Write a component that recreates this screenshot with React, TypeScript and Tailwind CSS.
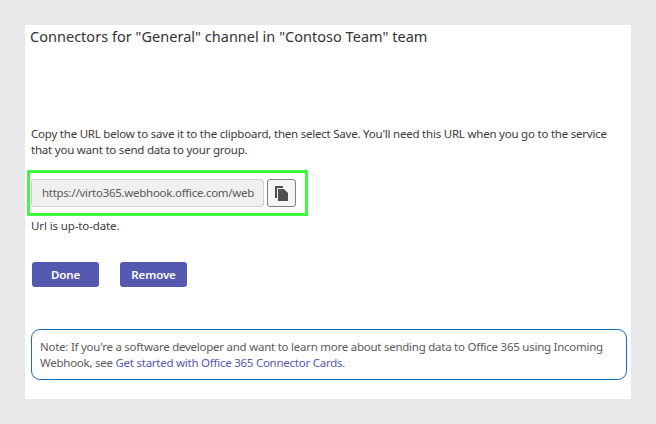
export default function App() {
  return (
    <div className="w-[656px] h-[424px] bg-[#e8e8ea] p-[25px] overflow-hidden" style={{ fontFamily: '"Noto Sans", "Open Sans", sans-serif' }}>
      <div className="w-[606px] h-[374px] bg-white flex flex-col">
        <h1 className="ml-[5px] text-[14.5px] leading-[22px] font-normal text-[#333] tracking-[0.02px]">Connectors for "General" channel in "Contoso Team" team</h1>
        <p className="ml-[6px] mt-[79px] w-[590px] text-[11.5px] leading-[16px] text-[#3a3a3a] tracking-[-0.22px]">
          Copy the URL below to save it to the clipboard, then select Save. You'll need this URL when you go to the service that you want to send data to your group.
        </p>
        <div className="ml-[2px] mt-[12px] w-[281px] h-[46px] border-[3px] border-[#3dfc3d] flex items-center pl-[1px] gap-[3px]">
          <div className="w-[233px] h-[28px] rounded-[3px] border border-[#d0d0d0] bg-[#f0f0f0] flex items-center pl-[10px] text-[11.5px] text-[#5a5a5a] tracking-[-0.28px] overflow-hidden whitespace-nowrap">
            https://virto365.webhook.office.com/web
          </div>
          <button className="w-[29px] h-[28px] rounded-[3px] border border-[#808080] bg-[#f5f5f5] flex items-center justify-center">
            <svg width="14" height="15" viewBox="0 0 14 15" fill="#505050">
              <path d="M0 0h8v2H2v10H0z" />
              <path d="M3 3h6l4 4v8H3z" />
            </svg>
          </button>
        </div>
        <p className="ml-[6px] mt-[2px] text-[11.5px] leading-[16px] text-[#3a3a3a] tracking-[-0.12px]">Url is up-to-date.</p>
        <div className="ml-[7px] mt-[28px] flex gap-[21px]">
          <button className="w-[67px] h-[25px] rounded-[3px] bg-[#5558af] text-white text-[11.5px] font-semibold tracking-[-0.1px]">Done</button>
          <button className="w-[67px] h-[25px] rounded-[3px] bg-[#5558af] text-white text-[11.5px] font-semibold tracking-[-0.1px]">Remove</button>
        </div>
        <div className="ml-[6px] mt-[42px] w-[596px] h-[51px] rounded-[9px] border border-[#1a6fbd] pl-[8px] pt-[9px] text-[11.5px] leading-[16px] text-[#5a5a5a] tracking-[-0.25px]">
          Note: If you're a software developer and want to learn more about sending data to Office 365 using Incoming Webhook, see <a className="text-[#5558af]">Get started with Office 365 Connector Cards</a>.
        </div>
      </div>
    </div>
  );
}
